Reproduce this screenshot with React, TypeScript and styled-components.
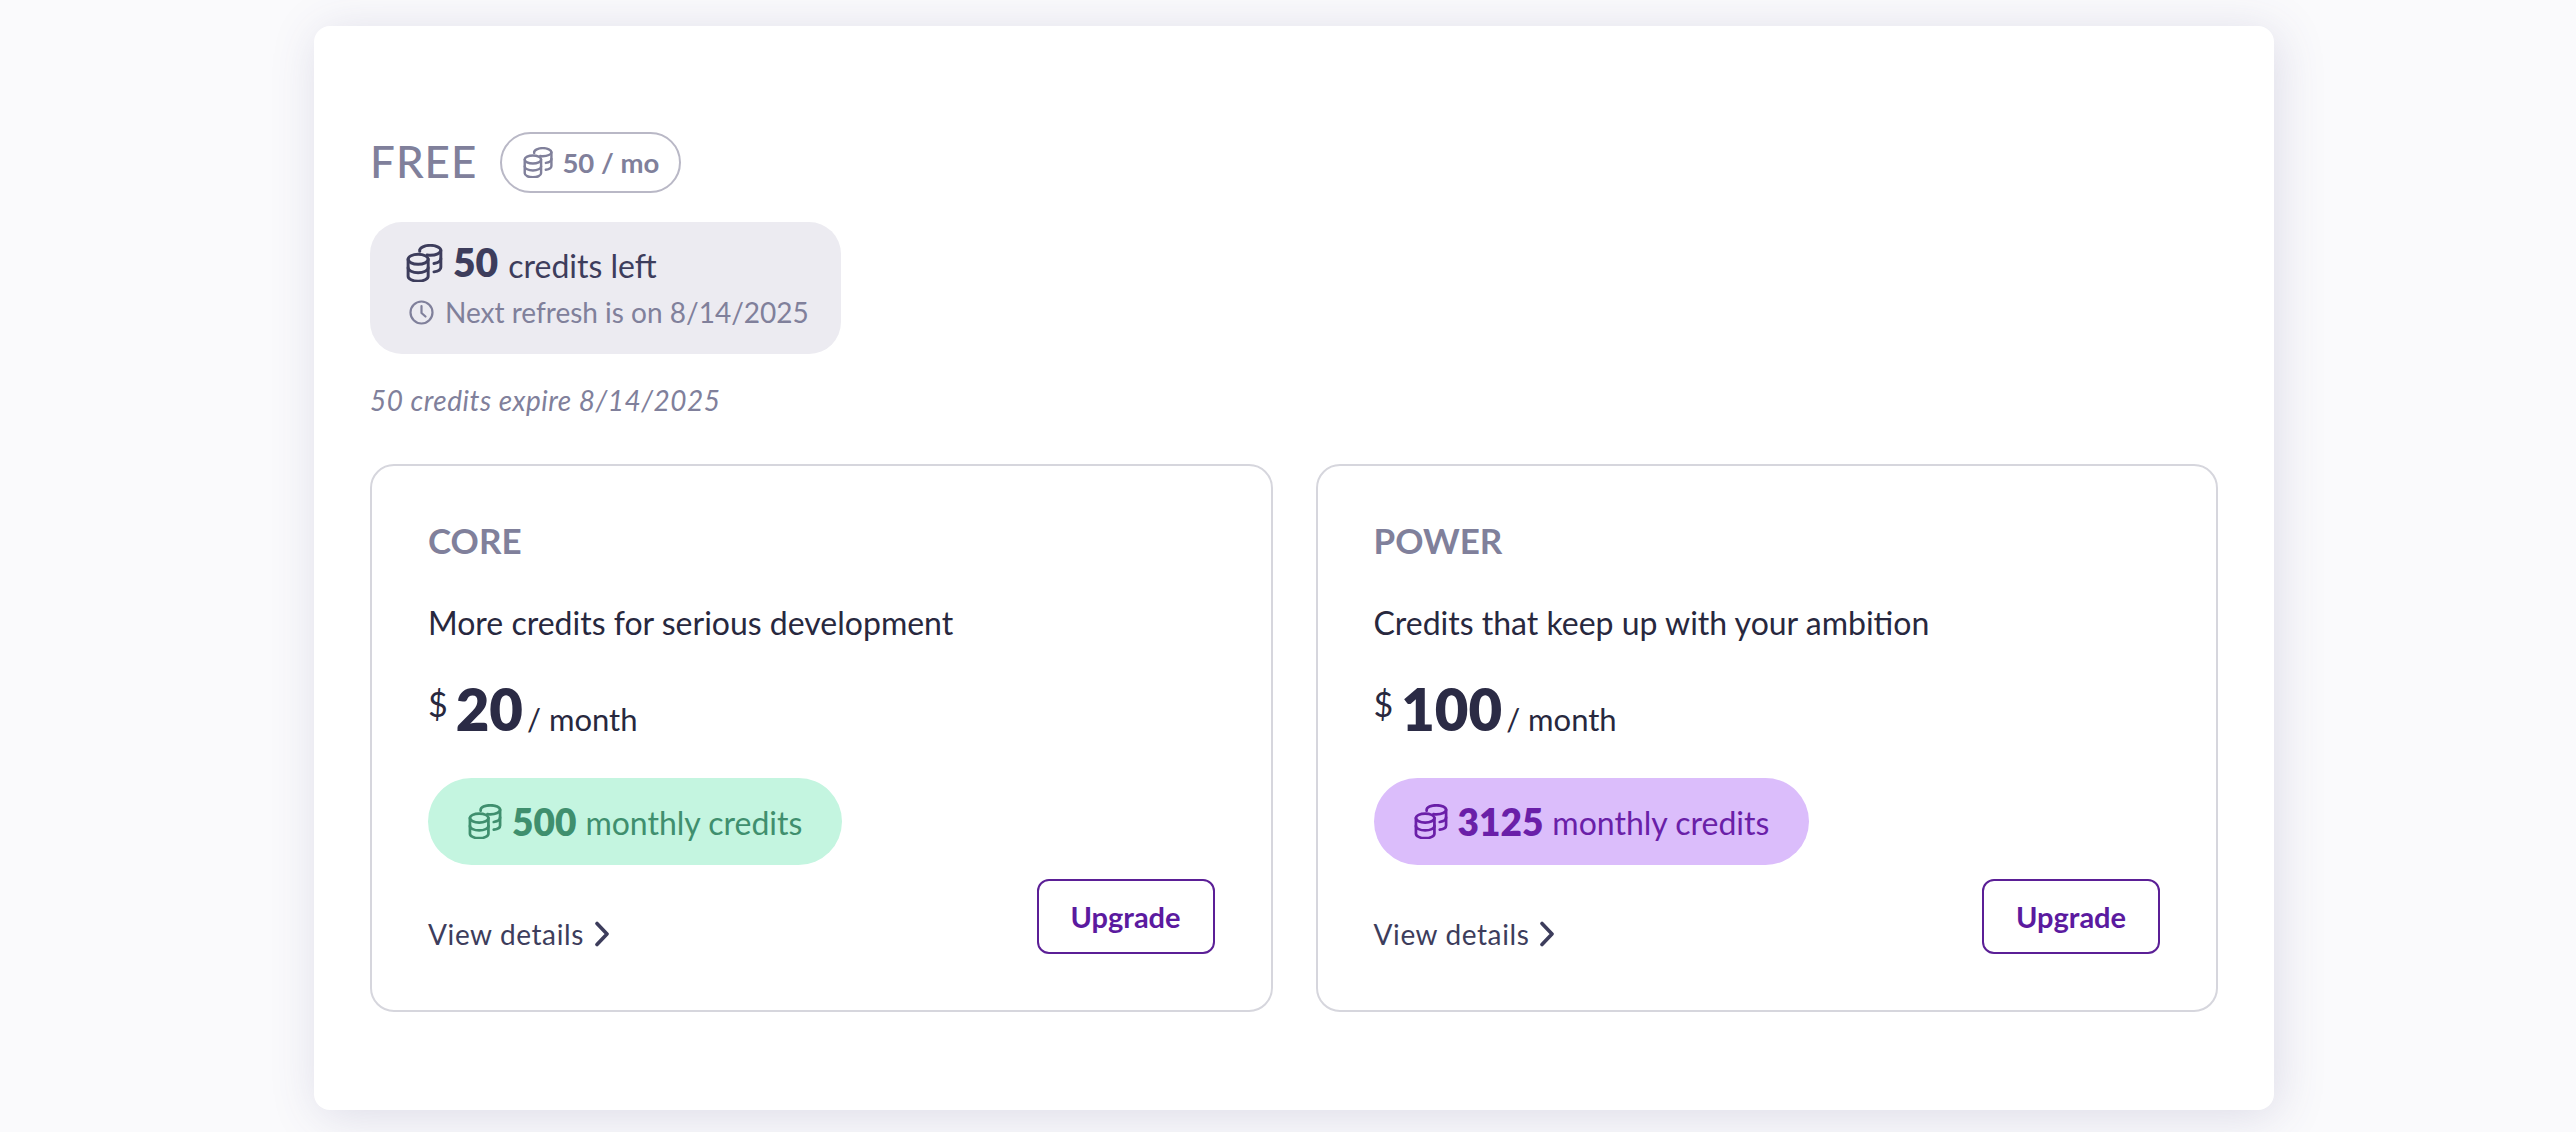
import React from 'react';
import styled, {createGlobalStyle} from "styled-components";

const GlobalStyle = createGlobalStyle`
  html, body {
    margin: 0;
    height: 1132px;
    overflow: hidden;
    background: #fafafc;
    font-family: Lato, "Open Sans", sans-serif;
  }
  svg {
    flex-shrink: 0;
  }
`

const CoinsIcon: React.FC<{size: number}> = ({size}) => (
  <svg width={size} height={size} viewBox="0 0 36 36" fill="none" stroke="currentColor"
       strokeWidth="2.800" strokeLinecap="round" strokeLinejoin="round">
    <ellipse cx="11.500" cy="14.500" rx="9.500" ry="4.700"/>
    <path d="M2 14.500v16c0 2.600 4.300 4.700 9.500 4.700s9.500-2.100 9.500-4.700v-16"/>
    <path d="M2 22.500c0 2.600 4.300 4.700 9.500 4.700s9.500-2.100 9.500-4.700"/>
    <path d="M13 7c0-.4-.100-.700 0-1 0-2.600 4.700-4.700 10-4.700S33 3.400 33 6v16c0 2.100-2.500 3.800-6.500 4.400"/>
    <path d="M33 6c0 2.600-4.500 4.700-10 4.700-1 0-2-.1-3-.2"/>
    <path d="M33 14c0 2.100-2.500 3.900-6.500 4.500"/>
  </svg>
)

const ClockIcon: React.FC = () => (
  <svg width="25" height="25" viewBox="0 0 25 25" fill="none" stroke="currentColor"
       strokeWidth="2.200" strokeLinecap="round" strokeLinejoin="round">
    <circle cx="12.500" cy="12.500" r="11"/>
    <path d="M12.500 6v7l4 3.500"/>
  </svg>
)

const Chevron: React.FC = () => (
  <svg width="16" height="26" viewBox="0 0 16 26" fill="none" stroke="currentColor"
       strokeWidth="3.600" strokeLinecap="round" strokeLinejoin="round">
    <path d="M3 2.500 13 13 3 23.500"/>
  </svg>
)

type Plan = {
  name: string
  tagline: string
  price: number
  credits: number
  tone: 'green' | 'purple'
}

const plans: Plan[] = [
  {name: 'CORE', tagline: 'More credits for serious development', price: 20, credits: 500, tone: 'green'},
  {name: 'POWER', tagline: 'Credits that keep up with your ambition', price: 100, credits: 3125, tone: 'purple'},
]

export default function App() {
  return (
    <Page>
      <GlobalStyle/>
      <Panel>
        <TitleRow>
          <PlanTitle>FREE</PlanTitle>
          <AllowanceBadge>
            <CoinsIcon size={31}/>
            <span>50 / mo</span>
          </AllowanceBadge>
        </TitleRow>
        <Balance>
          <BalanceRow>
            <CoinsIcon size={38}/>
            <BalanceCount>50</BalanceCount>
            <BalanceLabel>credits left</BalanceLabel>
          </BalanceRow>
          <RefreshRow>
            <ClockIcon/>
            <span>Next refresh is on 8/14/2025</span>
          </RefreshRow>
        </Balance>
        <Expiry>50 credits expire 8/14/2025</Expiry>
        <PlanGrid>
          {plans.map(plan =>
            <PlanCard key={plan.name}>
              <PlanName>{plan.name}</PlanName>
              <Tagline>{plan.tagline}</Tagline>
              <PriceRow>
                <Dollar>$</Dollar>
                <Amount>{plan.price}</Amount>
                <Period>/ month</Period>
              </PriceRow>
              <CreditPill $tone={plan.tone}>
                <CoinsIcon size={35}/>
                <PillCount>{plan.credits}</PillCount>
                <PillLabel>monthly credits</PillLabel>
              </CreditPill>
              <CardFooter>
                <DetailsLink>View details <Chevron/></DetailsLink>
                <UpgradeButton>Upgrade</UpgradeButton>
              </CardFooter>
            </PlanCard>
          )}
        </PlanGrid>
      </Panel>
    </Page>
  );
}

const Page = styled.div`
  padding: 26px 0 0 314px;
  display: flex;
`
const Panel = styled.div`
  width: 1960px;
  height: 1084px;
  box-sizing: border-box;
  padding: 106px 56px 0 56px;
  background: #fff;
  border-radius: 16px;
  box-shadow: 4px 6px 48px rgba(80, 70, 130, 0.17);
`
const TitleRow = styled.div`
  display: flex;
  align-items: center;
  gap: 23px;
  height: 61px;
`
const PlanTitle = styled.div`
  font-size: 44px;
  font-weight: 500;
  color: #80809b;
  letter-spacing: 1px;
  margin-top: -3px;
`
const AllowanceBadge = styled.div`
  display: flex;
  align-items: center;
  gap: 8px;
  box-sizing: border-box;
  height: 61px;
  width: 181px;
  padding: 0 21px;
  border: 2px solid #b9b8c6;
  border-radius: 31px;
  font-size: 27.500px;
  font-weight: 700;
  color: #80809b;
  white-space: nowrap;
`
const Balance = styled.div`
  display: flex;
  flex-direction: column;
  box-sizing: border-box;
  width: 471px;
  height: 132px;
  margin-top: 29px;
  padding: 22px 36px 0 36px;
  background: #ecebf1;
  border-radius: 32px;
  white-space: nowrap;
`
const BalanceRow = styled.div`
  display: flex;
  align-items: center;
  height: 38px;
  gap: 9px;
  color: #3d3d5c;
`
const BalanceCount = styled.span`
  font-size: 39px;
  font-weight: 800;
  margin-top: -2px;
`
const BalanceLabel = styled.span`
  font-size: 32px;
  margin-left: 1px;
  padding-top: 4px;
`
const RefreshRow = styled.div`
  display: flex;
  align-items: center;
  gap: 11px;
  margin-top: 13px;
  padding-left: 3px;
  font-size: 28px;
  color: #80809b;
`
const Expiry = styled.div`
  margin-top: 29px;
  height: 34px;
  font-size: 28px;
  line-height: 34px;
  font-style: italic;
  letter-spacing: 0.5px;
  color: #80809b;
`
const PlanGrid = styled.div`
  display: grid;
  grid-template-columns: 1fr 1fr;
  gap: 43px;
  margin-top: 47px;
`
const PlanCard = styled.div`
  box-sizing: border-box;
  height: 548px;
  padding: 55px 56px 0 56px;
  border: 2px solid #d6d6dd;
  border-radius: 24px;
`
const PlanName = styled.div`
  font-size: 35px;
  line-height: 38px;
  font-weight: 700;
  color: #80809b;
`
const Tagline = styled.div`
  margin-top: 42px;
  font-size: 32px;
  line-height: 44px;
  color: #28283e;
`
const PriceRow = styled.div`
  display: flex;
  align-items: baseline;
  margin-top: 29px;
  height: 70px;
  color: #28283e;
`
const Dollar = styled.span`
  font-size: 34px;
  position: relative;
  top: -14px;
  margin-right: 8px;
`
const Amount = styled.span`
  font-size: 58px;
  font-weight: 800;
  color: #2b2b45;
  margin-right: 4px;
`
const Period = styled.span`
  font-size: 31px;
`
const CreditPill = styled.div<{$tone: 'green' | 'purple'}>`
  display: inline-flex;
  align-items: center;
  gap: 9px;
  height: 87px;
  margin-top: 34px;
  padding: 0 40px;
  border-radius: 44px;
  background: ${({$tone}) => $tone === 'green' ? '#c4f5e0' : '#dbbdfb'};
  color: ${({$tone}) => $tone === 'green' ? '#3f8f6e' : '#6a1fa8'};
`
const PillCount = styled.span`
  font-size: 37px;
  font-weight: 800;
`
const PillLabel = styled.span`
  font-size: 32px;
  padding-top: 1px;
`
const CardFooter = styled.div`
  display: flex;
  justify-content: space-between;
  align-items: flex-end;
  margin-top: 14px;
`
const DetailsLink = styled.div`
  display: flex;
  align-items: center;
  gap: 10px;
  font-size: 28px;
  line-height: 34px;
  letter-spacing: 0.6px;
  margin-bottom: 3px;
  color: #3d3d5c;
`
const UpgradeButton = styled.div`
  display: flex;
  align-items: center;
  justify-content: center;
  box-sizing: border-box;
  width: 178px;
  height: 75px;
  border: 2px solid #5b1f96;
  border-radius: 12px;
  font-size: 29px;
  font-weight: 700;
  color: #5b1a9f;
`
